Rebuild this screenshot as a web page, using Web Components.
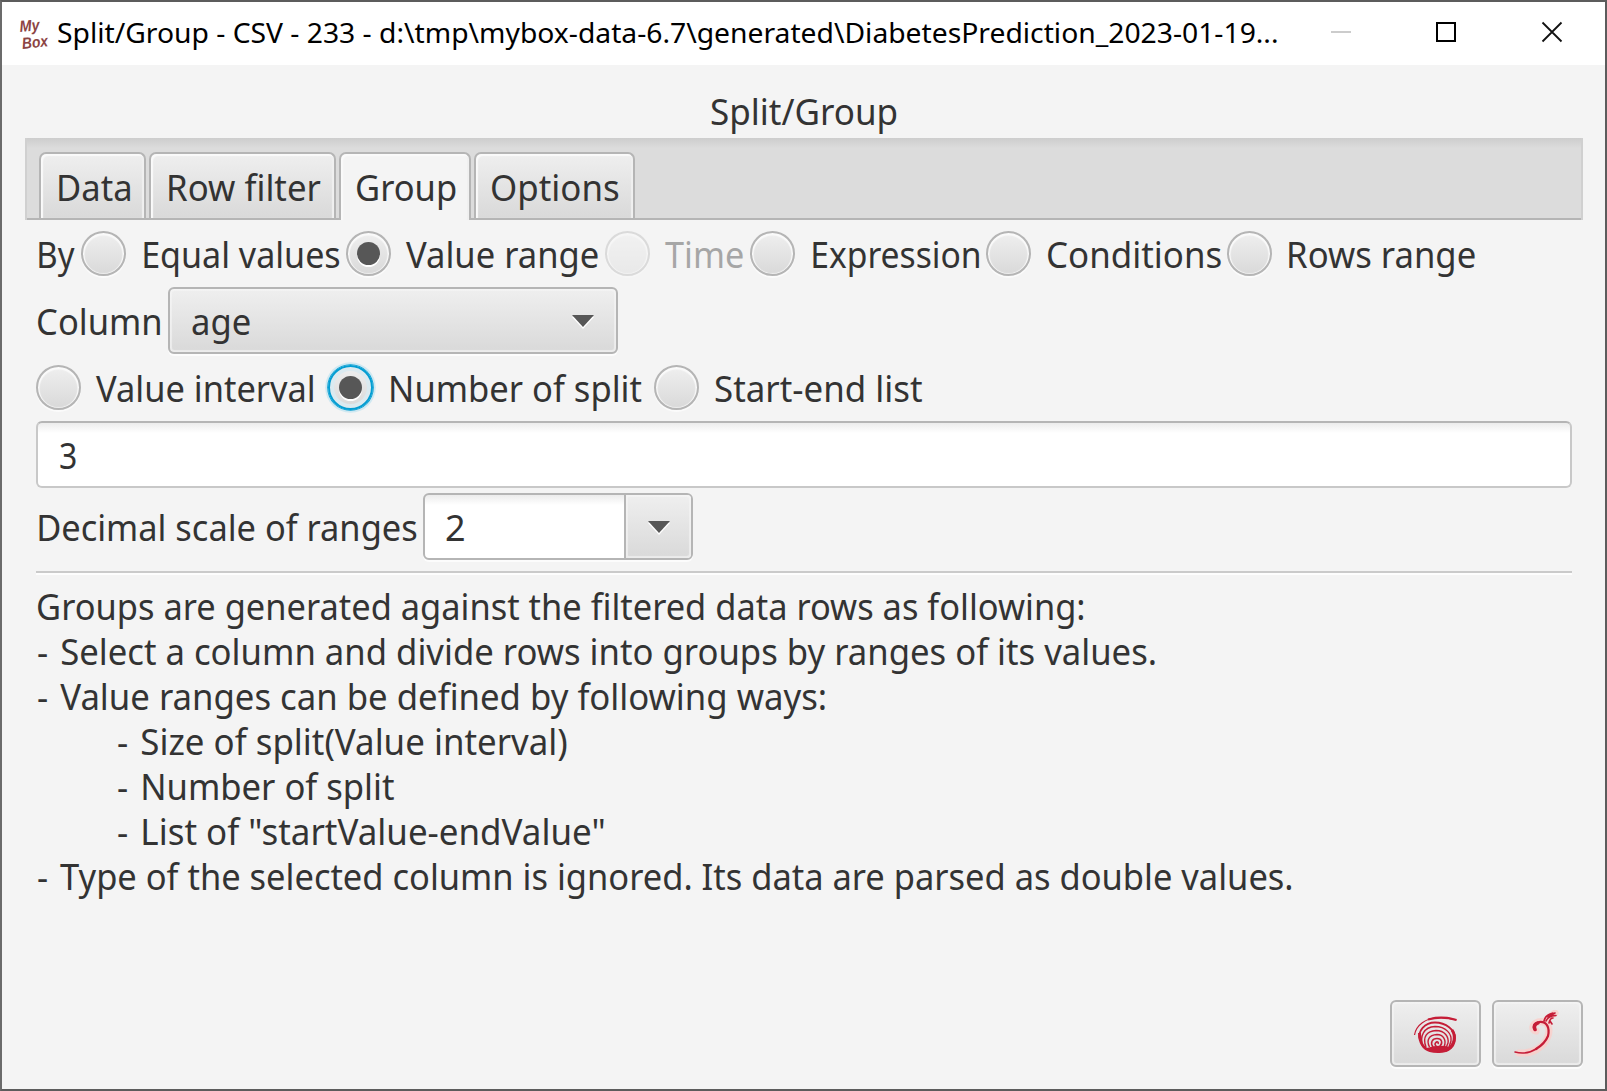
<!DOCTYPE html>
<html lang="en">
<head>
<meta charset="utf-8">
<title>Split/Group</title>
<style>
html,body{margin:0;height:100%;overflow:hidden;background:#5c5c5c}
body{font:36px/45px "Noto Sans","Open Sans",sans-serif;color:#333}
.row{display:flex;align-items:flex-start}
.row fx-text{flex:none}
</style>
</head>
<body>
<app-window>
  <fx-tabs slot="tabs">
    <fx-tab w="107" label="Data" tw="71.5" pad="20"></fx-tab>
    <fx-tab w="187" label="Row filter" tw="152" pad="20"></fx-tab>
    <fx-tab w="132" label="Group" tw="99" pad="18" selected></fx-tab>
    <fx-tab w="161" label="Options" tw="126.5" pad="18"></fx-tab>
  </fx-tabs>
  <div class="row" style="height:56px;padding:11px 0 0 3px">
    <fx-text w="36">By</fx-text>
    <fx-radio style="margin-left:6px" label="Equal values" tw="195.5"></fx-radio>
    <fx-radio style="margin-left:7px" label="Value range" tw="192" gap="15" selected></fx-radio>
    <fx-radio style="margin-left:7px" label="Time" tw="78" gap="15" disabled></fx-radio>
    <fx-radio style="margin-left:6.5px" label="Expression" tw="166.5" gap="18"></fx-radio>
    <fx-radio style="margin-left:7px" label="Conditions" tw="173" gap="16.5"></fx-radio>
    <fx-radio style="margin-left:6px" label="Rows range" tw="186" gap="17.5"></fx-radio>
  </div>
  <div class="row" style="height:78px">
    <fx-text w="122.5" style="margin:11px 7.5px 0 1.5px">Column</fx-text>
    <fx-combo w="450" value="age" tw="58" pad="24"></fx-combo>
  </div>
  <div class="row" style="height:56px">
    <fx-radio label="Value interval" tw="217.5" gap="15"></fx-radio>
    <fx-radio style="margin-left:14.5px" label="Number of split" tw="251" gap="17.5" selected focused></fx-radio>
    <fx-radio style="margin-left:12.5px" label="Start-end list" tw="207.5" gap="16"></fx-radio>
  </div>
  <fx-field value="3" tw="16"></fx-field>
  <div class="row" style="height:78px;padding-top:5px">
    <fx-text w="377.5" style="margin:11px 7px 0 2.5px">Decimal scale of ranges</fx-text>
    <fx-combo w="270" value="2" tw="18" pad="23" editable></fx-combo>
  </div>
  <fx-separator></fx-separator>
  <fx-note>
    <fx-text w="1046">Groups are generated against the filtered data rows as following:</fx-text>
    <fx-text class="l" w="1117.5"><span>-</span> Select a column and divide rows into groups by ranges of its values.</fx-text>
    <fx-text class="l" w="787.5"><span>-</span> Value ranges can be defined by following ways:</fx-text>
    <fx-text class="i" w="449"><span>-</span> Size of split(Value interval)</fx-text>
    <fx-text class="i" w="276.5"><span>-</span> Number of split</fx-text>
    <fx-text class="i" w="486"><span>-</span> List of "startValue-endValue"</fx-text>
    <fx-text class="l" w="1254"><span>-</span> Type of the selected column is ignored. Its data are parsed as double values.</fx-text>
  </fx-note>
  <fx-button slot="actions">
    <svg width="46" height="38" viewBox="0 0 46 38" fill="none" stroke="#c51d37" style="margin:3px 0 0 1px">
      <path d="M1.500 19C3 9 13 2 25 1.500C32 1.500 38 3 43.500 4" stroke-width="1.200"/>
      <path d="M15 3.500C24 1 35 1.500 43.500 4" stroke-width="2.200"/>
      <path d="M6.500 17C6.500 27 11 33 17 34.500C22 36 31 36 35 33.500C42 28 43 20 39 14" stroke-width="3"/>
      <path d="M14 32Q25 28 37 31L33 36H18Z" fill="#c51d37" stroke="none"/>
      <path d="M7 24C4 15 12 6.500 22 6.500C33 6.500 42 14 42 22C42 28 39 32 35 34" stroke-width="1.800"/>
      <path d="M10 31C6 20 11 11 22 10.500C33 10.500 39 18 38 25L36 31" stroke-width="1.400"/>
      <path d="M13 31C9 21 14 15 23 14.500C32 14.500 36 21 35 27L33 32" stroke-width="1.400"/>
      <path d="M16.500 31C13 24 16 19 24 18.500C30 18.500 34 24 31 31" stroke-width="1.400"/>
      <path d="M20 31C17 27 19 22.500 24 22.500C29 22.500 30 27 27 30C24 32 21 29 22.500 27C24 25 26 26 25 28" stroke-width="1.500"/>
    </svg>
  </fx-button>
  <fx-button slot="actions">
    <svg width="52" height="50" viewBox="0 0 52 50" fill="none" stroke-linecap="round" style="margin:2px 0 0 1px">
      <g stroke="#fccfca" stroke-width="7" opacity=".8">
        <path d="M24 21C19 20 20 14 26 12C35 10 39 17 36 26C32 38 20 44 7 43"/>
        <path d="M34 10L43 3"/>
      </g>
      <g stroke="#c51d37">
        <path d="M23.500 20C20 17 22 12.500 27 12C35 11 38 18 36 26C34 31 29 36 24 39" stroke-width="2.200"/>
        <path d="M25 38.500C18 43 10 44 3 42" stroke-width="1.500"/>
        <path d="M23 19.500Q21 15 26 13" stroke-width="3.500"/>
        <path d="M32 11Q33 5 41 3M34 11Q36 6 44 5.500M37 13Q38 8 41 8M36 7L43 3M38 11L40 14" stroke-width="1.600"/>
      </g>
    </svg>
  </fx-button>
</app-window>
<script>
const css = s => `<style>${s}</style>`;
const face = 'linear-gradient(#efefef,#d9d9d9)';
class Base extends HTMLElement {
  connectedCallback() {
    if (this.shadowRoot) return;
    this.attachShadow({mode: 'open'}).innerHTML = this.view();
    this.ready();
  }
  a(n) { return this.getAttribute(n); }
  ready() {}
}

/* A single line of text whose inked width is given by the w attribute.
   A leading bullet dash in a span gets a slightly wider gap after it. */
customElements.define('fx-text', class extends Base {
  view() {
    return css(`:host{display:block;width:${this.a('w')}px;height:45px;white-space:nowrap}
      .t{display:inline-block;transform-origin:0 0;white-space:nowrap}`) + '<span class="t"><slot></slot></span>';
  }
  ready() {
    const st = getComputedStyle(this);
    const c = document.createElement('canvas').getContext('2d');
    c.font = `${st.fontSize} ${st.fontFamily}`;
    const m = c.measureText(this.textContent);
    const dash = this.querySelector('span');
    const k = (this.a('w') - (dash ? 3 : 0)) / (m.actualBoundingBoxRight + m.actualBoundingBoxLeft);
    if (dash) dash.style.marginRight = 3 / k + 'px';
    this.shadowRoot.querySelector('.t').style.transform =
      `translate(${m.actualBoundingBoxLeft * k}px,.6px) scaleX(${k})`;
  }
});

customElements.define('app-window', class extends Base {
  view() {
    return css(`:host{display:flex;flex-direction:column;box-sizing:border-box;width:1607px;height:1091px;
        border:2px solid #5c5c5c;border-left-color:#6b6b6b;background:#f4f4f4}
      header{display:flex;align-items:center;height:63px;background:#fff;color:#000;font-size:28px;padding-left:9px;flex:none}
      header fx-text{margin:0 0 4px -1px}
      .logo{line-height:normal;overflow:visible;flex:none}
      .btns{display:flex;margin:0 0 3px 54px;gap:85px;align-items:center}
      h1{margin:0;font:inherit;height:73px;display:flex;justify-content:center;align-items:flex-end}
      h1 fx-text{margin-bottom:5px}
      main{flex:1;padding:0 33px 0 34px}
      footer{display:flex;justify-content:flex-end;gap:11px;padding:0 22px 22px}`) +
    `<header>
      <svg class="logo" width="48" height="56" viewBox="-8 -11 48 56" fill="#8c4444" font-family="Liberation Sans,sans-serif" font-style="italic" font-weight="700">
        <text x="1" y="15" font-size="16" textLength="20" lengthAdjust="spacingAndGlyphs" transform="rotate(-5 1 15)">My</text>
        <text x="3.500" y="32" font-size="16" textLength="26" lengthAdjust="spacingAndGlyphs" transform="rotate(-6 3 32)">Box</text>
      </svg>
      <fx-text w="1219">Split/Group - CSV - 233 - d:\\tmp\\mybox-data-6.7\\generated\\DiabetesPrediction_2023-01-19...</fx-text>
      <div class="btns">
        <svg width="20" height="22"><path d="M0 11H20" stroke="#ccc" stroke-width="2"/></svg>
        <svg width="20" height="22"><path d="M1 2H19V20H1Z" fill="none" stroke="#000" stroke-width="2"/></svg>
        <svg width="22" height="22"><path d="M1.500 1.500L20.500 20.500M20.500 1.500L1.500 20.500" stroke="#111" stroke-width="1.800"/></svg>
      </div>
    </header>
    <h1><fx-text w="186">Split/Group</fx-text></h1>
    <slot name="tabs"></slot>
    <main><slot></slot></main>
    <footer><slot name="actions"></slot></footer>`;
  }
});

customElements.define('fx-tabs', class extends Base {
  view() {
    return css(`:host{display:flex;gap:3px;box-sizing:border-box;height:82px;margin:0 22px 0 23px;padding:14px 14px 0;
      background:linear-gradient(#b5b5b5,#b5b5b5) 0 100%/100% 2px no-repeat,linear-gradient(#cdcdcd,#dcdcdc 10px);
      box-shadow:inset 2px 0 #d0d0d0,inset -2px 0 #d0d0d0}`) + '<slot></slot>';
  }
});

customElements.define('fx-tab', class extends Base {
  view() {
    const sel = this.hasAttribute('selected');
    return css(`:host{display:block;box-sizing:border-box;width:${this.a('w')}px;height:${sel ? 68 : 66}px;
      border:2px solid #b5b5b5;border-bottom:0;border-radius:7px 7px 0 0;padding:9.500px 0 0 ${this.a('pad') - 2}px;
      background:${sel ? '#f4f4f4' : 'linear-gradient(#efefef,#d9d9d9)'};
      box-shadow:inset 2px 2px 1px #fafafa,inset -2px 0 1px #f0f0f0}`) +
      `<fx-text w="${this.a('tw')}">${this.a('label')}</fx-text>`;
  }
});

customElements.define('fx-radio', class extends Base {
  view() {
    const sel = this.hasAttribute('selected'), foc = this.hasAttribute('focused');
    return css(`:host{display:flex;height:45px;flex:none}
      :host([disabled]){opacity:.4}
      i{box-sizing:border-box;width:45px;height:45px;border-radius:50%;border:2px solid ${foc ? '#039ed3' : '#b5b5b5'};
        background:${face};display:flex;align-items:center;justify-content:center;margin-right:${this.a('gap') || 17.5}px;
        box-shadow:${foc ? '0 0 0 .8px #039ed3,0 0 0 2.800px #cfe8f1,inset 0 0 0 4px #dbeaf0' : '0 2px 0 #fbfbfb,inset 0 1px 1px 1.500px #fafafa'}}
      b{width:23px;height:23px;border-radius:50%;background:#575757;box-shadow:0 2px 0 #fff}`) +
      `<i>${sel ? '<b></b>' : ''}</i><fx-text w="${this.a('tw')}">${this.a('label')}</fx-text>`;
  }
});

customElements.define('fx-combo', class extends Base {
  view() {
    const ed = this.hasAttribute('editable');
    return css(`:host{display:flex;box-sizing:border-box;width:${this.a('w')}px;height:67px;border:2px solid #b5b5b5;
        border-radius:6px;background:${ed ? 'linear-gradient(#ececec,#fff 10px)' : face};
        box-shadow:0 2px 0 #fcfcfc${ed ? '' : ',inset 0 0 1px 2px #f6f6f6aa'}}
      .v{flex:1;padding:9px 0 0 ${this.a('pad') - 2}px}
      .b{display:flex;align-items:center;box-sizing:border-box;width:${ed ? 67 : 65}px;justify-content:center;
        ${ed ? `border-left:2px solid #b5b5b5;background:${face};box-shadow:inset 0 0 1px 2px #f6f6f6aa;border-radius:0 4px 4px 0` : ''}}`) +
      `<div class="v"><fx-text w="${this.a('tw')}">${this.a('value')}</fx-text></div>
       <div class="b"><svg width="24" height="16"><path d="M1 4H23L12 16Z" fill="#fff"/><path d="M1 2H23L12 14Z" fill="#575757"/></svg></div>`;
  }
});

customElements.define('fx-field', class extends Base {
  view() {
    return css(`:host{display:block;box-sizing:border-box;height:67px;border:2px solid #c8c8c8;border-top-color:#b5b5b5;
      border-radius:6px;background:linear-gradient(#ececec,#fff 10px);padding:9px 0 0 22px}`) +
      `<fx-text w="${this.a('tw')}">${this.a('value')}</fx-text>`;
  }
});

customElements.define('fx-separator', class extends Base {
  view() { return css(':host{display:block;height:2px;background:#cacaca;box-shadow:0 2px 0 #fdfdfd}'); }
});

customElements.define('fx-note', class extends Base {
  view() {
    return css(`:host{display:block;padding:10px 0 0 1.500px}
      ::slotted(.l){margin-left:.5px}::slotted(.i){margin-left:80.500px}`) + '<slot></slot>';
  }
});

customElements.define('fx-button', class extends Base {
  view() {
    return css(`:host{display:flex;align-items:center;justify-content:center;box-sizing:border-box;width:91px;height:67px;
      border:2px solid #b5b5b5;border-radius:6px;background:${face};
      box-shadow:0 2px 0 #fcfcfc,inset 0 0 1px 2px #f6f6f6aa}`) + '<slot></slot>';
  }
});
</script>
</body>
</html>
